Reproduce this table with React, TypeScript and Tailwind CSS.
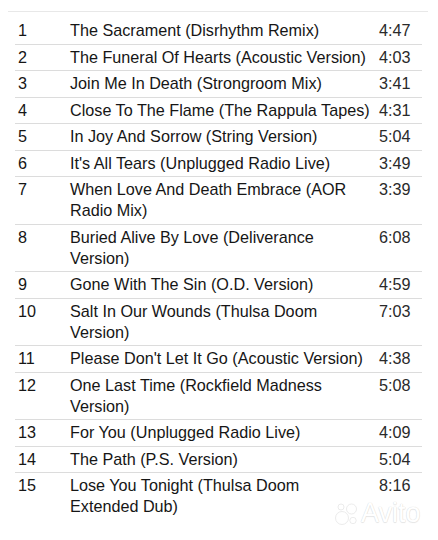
import React from "react";

const tracks: [string, string[], string][] = [
  ["1", ["The Sacrament (Disrhythm Remix)"], "4:47"],
  ["2", ["The Funeral Of Hearts (Acoustic Version)"], "4:03"],
  ["3", ["Join Me In Death (Strongroom Mix)"], "3:41"],
  ["4", ["Close To The Flame (The Rappula Tapes)"], "4:31"],
  ["5", ["In Joy And Sorrow (String Version)"], "5:04"],
  ["6", ["It's All Tears (Unplugged Radio Live)"], "3:49"],
  ["7", ["When Love And Death Embrace (AOR", "Radio Mix)"], "3:39"],
  ["8", ["Buried Alive By Love (Deliverance", "Version)"], "6:08"],
  ["9", ["Gone With The Sin (O.D. Version)"], "4:59"],
  ["10", ["Salt In Our Wounds (Thulsa Doom", "Version)"], "7:03"],
  ["11", ["Please Don't Let It Go (Acoustic Version)"], "4:38"],
  ["12", ["One Last Time (Rockfield Madness", "Version)"], "5:08"],
  ["13", ["For You (Unplugged Radio Live)"], "4:09"],
  ["14", ["The Path (P.S. Version)"], "5:04"],
  ["15", ["Lose You Tonight (Thulsa Doom", "Extended Dub)"], "8:16"],
];

export default function App() {
  return (
    <div
      className="relative w-[438px] h-[540px] overflow-hidden bg-white pt-[11px] text-[#161616]"
      style={{ fontFamily: '"Liberation Sans", Arial, Helvetica, sans-serif' }}
    >
      <div className="ml-[8px] w-[420px] border-t border-[#e8e8e8]" />
      <div className="ml-[15px] mt-[6px] w-[407px]">
        {tracks.map(([n, lines, dur], i) => (
          <div
            key={n}
            className={`grid grid-cols-[55px_309px_43px] py-[2.25px] text-[16.2px] leading-[21px] ${
              i < tracks.length - 1 ? "border-b border-[#dcdcdc]" : ""
            }`}
          >
            <div className="pl-[3px]">{n}</div>
            <div className="flex flex-col whitespace-nowrap">
              {lines.map((l) => (
                <span key={l}>{l}</span>
              ))}
            </div>
            <div className="whitespace-nowrap text-[#2a2a2a]">{dur}</div>
          </div>
        ))}
      </div>

      {/* Avito watermark */}
      <div className="absolute left-[334px] top-[500px] flex items-center gap-[1px]">
        <svg width="26" height="26" viewBox="0 0 26 26">
          <g fill="#ffffff" stroke="#e6e6e6" strokeWidth="0.8">
            <circle cx="8" cy="17" r="6.5" />
            <circle cx="17.5" cy="8" r="5" />
            <circle cx="19" cy="19.5" r="3.2" />
            <circle cx="7" cy="6" r="3" />
          </g>
        </svg>
        <span
          className="text-[27px] leading-[27px] text-white"
          style={{
            textShadow: "0 0 1px #dedede, 0 0 1px #dedede, 0 1px 1px #e8e8e8",
          }}
        >
          Avito
        </span>
      </div>
    </div>
  );
}
